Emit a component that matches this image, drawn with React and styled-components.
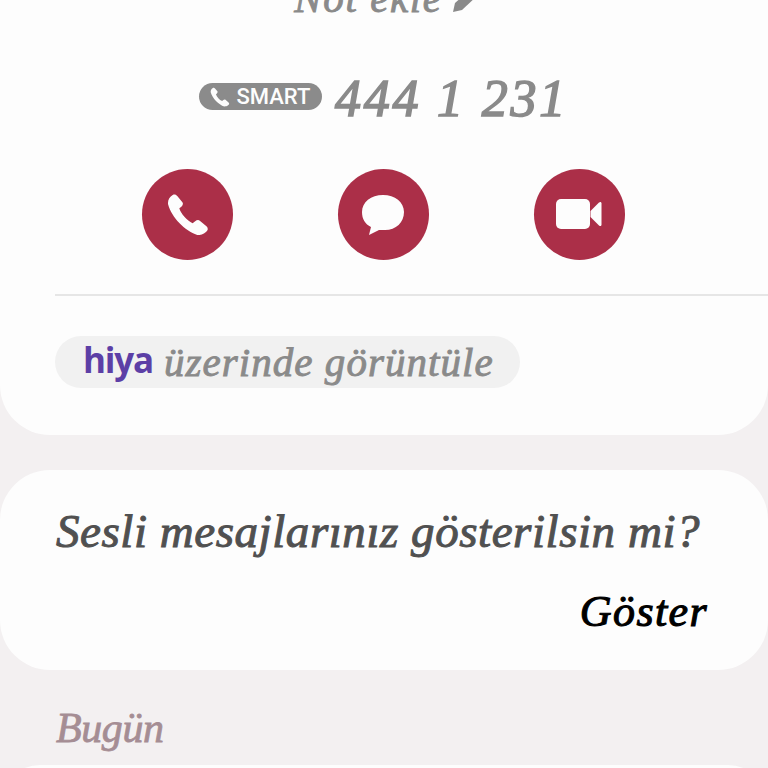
import styled, { createGlobalStyle } from "styled-components";

const GlobalStyle = createGlobalStyle`
  html, body {
    margin: 0;
    padding: 0;
    background: #f3f0f1;
  }
`;

const handFont = `"Liberation Serif", "DejaVu Serif", serif`;

const Screen = styled.div`
  width: 768px;
  height: 768px;
  overflow: hidden;
  background: #f3f0f1;
`;

const Card = styled.section`
  background: #fdfdfd;
  border-radius: 0 0 50px 50px;
  height: 435px;
  box-sizing: border-box;
  overflow: hidden;
  display: flex;
  flex-direction: column;
`;

const NoteRow = styled.div`
  height: 18px;
  padding-left: 4px;
  display: flex;
  justify-content: center;
  align-items: flex-end;
  gap: 10px;
  overflow: hidden;
  flex-shrink: 0;
`;

const NoteText = styled.span`
  font: italic 400 41px/41px ${handFont};
  color: #8a8a8a;
  letter-spacing: 1.6px;
  -webkit-text-stroke: 0.9px #8a8a8a;
  margin-bottom: -1px;
  white-space: nowrap;
`;

const PencilSvg = styled.svg`
  margin-bottom: 5px;
`;

const PhoneRow = styled.div`
  margin-top: 55px;
  height: 52px;
  display: flex;
  justify-content: center;
  align-items: center;
  gap: 13px;
  padding-right: 2px;
`;

const Badge = styled.span`
  height: 27px;
  width: 123px;
  margin-top: -5px;
  margin-left: 1px;
  border-radius: 14px;
  background: #8b8b8b;
  color: #fdfdfd;
  display: flex;
  align-items: center;
  justify-content: center;
  gap: 6px;
  font: 500 22px/27px Roboto, "Liberation Sans", sans-serif;
  flex-shrink: 0;
`;

const PhoneNumber = styled.span`
  font: italic 400 52px/52px ${handFont};
  color: #8a8a8a;
  letter-spacing: 2.8px;
  -webkit-text-stroke: 1.6px #8a8a8a;
  white-space: nowrap;
`;

const Actions = styled.div`
  margin-top: 44px;
  display: flex;
  justify-content: center;
  gap: 105px;
  padding-right: 2px;
`;

const ActionButton = styled.button`
  width: 91px;
  height: 91px;
  padding: 0;
  border: 0;
  border-radius: 50%;
  background: #ab2f48;
  display: flex;
  align-items: center;
  justify-content: center;
`;

const Divider = styled.hr`
  margin: 34px 0 0 55px;
  border: 0;
  border-top: 2px solid #e6e6e6;
`;

const HiyaPill = styled.div`
  margin: 40px 0 0 55px;
  width: 465px;
  height: 52px;
  border-radius: 26px;
  background: #f1f1f1;
  display: flex;
  align-items: center;
  padding-left: 28px;
  box-sizing: border-box;
  gap: 11px;
`;

const HiyaLogo = styled.span`
  font: 700 35px/52px "Open Sans", Lato, sans-serif;
  letter-spacing: -1.2px;
  color: #5c3fa6;
  margin-top: -5px;
`;

const PillText = styled.span`
  font: italic 400 41px/52px ${handFont};
  color: #8a8a8a;
  letter-spacing: 1.05px;
  -webkit-text-stroke: 0.9px #8a8a8a;
  white-space: nowrap;
`;

const PromptCard = styled.section`
  margin-top: 35px;
  height: 200px;
  border-radius: 50px;
  background: #fdfdfd;
  box-sizing: border-box;
  padding: 35px 60px 0 56px;
  display: flex;
  flex-direction: column;
`;

const PromptTitle = styled.h2`
  margin: 0;
  font: italic 400 47px/52px ${handFont};
  color: #505050;
  letter-spacing: 0.55px;
  -webkit-text-stroke: 1px #505050;
  white-space: nowrap;
`;

const ShowButton = styled.div`
  align-self: flex-end;
  margin-top: 29px;
  font: italic 400 44px/52px ${handFont};
  color: #000;
  letter-spacing: 1.4px;
  -webkit-text-stroke: 1.1px #000;
`;

const DayLabel = styled.h3`
  margin: 32px 0 0 56px;
  height: 63px;
  font: italic 400 42px/52px ${handFont};
  color: #a58d94;
  letter-spacing: -0.4px;
  -webkit-text-stroke: 0.8px #a58d94;
`;

const NextCard = styled.div`
  height: 40px;
  border-radius: 50px 50px 0 0;
  background: #fdfdfd;
`;

const PencilIcon = () => (
  <PencilSvg width="25" height="20" viewBox="0 0 25 20" aria-hidden="true">
    {/* only the lower tip of the pencil shows above the fold */}
    <path d="M0 19 L2 10 L10 3 L24 3 L9 17 Z" fill="#8a8a8a" />
  </PencilSvg>
);

const handset =
  "M6 2 C8 1 9.5 2 10.5 3 L15.5 9 C16.5 10.5 16 12 14.5 13.5 L12.5 15 C14 20.5 20 27 25.5 29.5 L28 27.5 C29.5 26.5 31 26 32.5 27 L39 32.5 C41 34.5 40.5 36.5 38.5 38 C36 40.5 33 41 30 41 C18 37 5 24 1.5 11 C1 7 3 4 6 2 Z";

const SmallPhone = () => (
  <svg width="20" height="20" viewBox="0 0 42 42" aria-hidden="true">
    <path d={handset} fill="#fdfdfd" />
  </svg>
);

const CallIcon = () => (
  <svg width="42" height="43" viewBox="0 0 40 42" aria-hidden="true">
    <path d={handset} fill="#fdfdfd" />
  </svg>
);

const MessageIcon = () => (
  <svg width="44" height="42" viewBox="0 0 44 42" aria-hidden="true">
    <path
      d="M22 1 C34 1 43 8 43 18 C43 29 34 37 22 36 L18 36 L8 41 L10 33 C4 30 1 25 1 18 C1 8 10 1 22 1 Z"
      fill="#fdfdfd"
    />
  </svg>
);

const VideoIcon = () => (
  <svg width="46" height="31" viewBox="0 0 46 31" aria-hidden="true">
    <rect x="0" y="0" width="34" height="30" rx="5" fill="#fdfdfd" />
    <path d="M34.5 12 L43 3.5 C44.5 2.5 45.5 3 45.5 4.5 L45.5 25.5 C45.5 27 44.5 27.5 43 26.5 L34.5 18 Z" fill="#fdfdfd" />
  </svg>
);

export default function App() {
  return (
    <>
      <GlobalStyle />
      <Screen>
        <Card>
          <NoteRow>
            <NoteText>Not ekle</NoteText>
            <PencilIcon />
          </NoteRow>
          <PhoneRow>
            <Badge>
              <SmallPhone />
              SMART
            </Badge>
            <PhoneNumber>444 1 231</PhoneNumber>
          </PhoneRow>
          <Actions>
            <ActionButton aria-label="Ara">
              <CallIcon />
            </ActionButton>
            <ActionButton aria-label="Mesaj">
              <MessageIcon />
            </ActionButton>
            <ActionButton aria-label="Görüntülü arama">
              <VideoIcon />
            </ActionButton>
          </Actions>
          <Divider />
          <HiyaPill>
            <HiyaLogo>hiya</HiyaLogo>
            <PillText>üzerinde görüntüle</PillText>
          </HiyaPill>
        </Card>
        <PromptCard>
          <PromptTitle>Sesli mesajlarınız gösterilsin mi?</PromptTitle>
          <ShowButton>Göster</ShowButton>
        </PromptCard>
        <DayLabel>Bugün</DayLabel>
        <NextCard />
      </Screen>
    </>
  );
}
